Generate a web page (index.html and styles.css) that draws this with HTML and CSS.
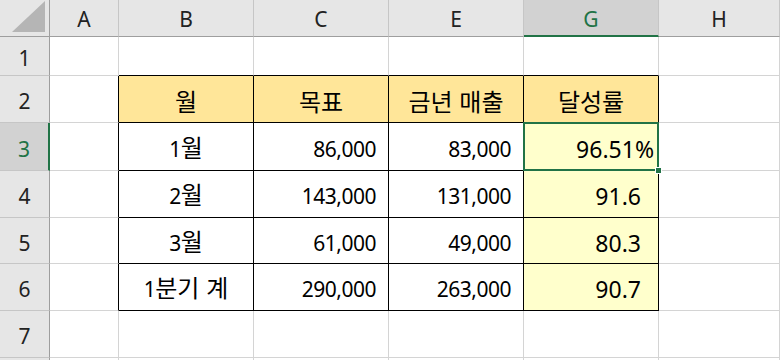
FILE: index.html
```html
<!DOCTYPE html>
<html lang="ko">
<head>
<meta charset="utf-8">
<link rel="stylesheet" href="styles.css">
</head>
<body>
<div class="sheet">
  <div class="corner"><svg class="tri" width="34" height="32" viewBox="0 0 34 32"><polygon points="33,0 33,31 0,31" fill="#b5b5b5"/></svg></div>
  <div class="ch">A</div>
  <div class="ch">B</div>
  <div class="ch">C</div>
  <div class="ch">E</div>
  <div class="ch sel-ch">G</div>
  <div class="ch">H</div>

  <div class="rh">1</div>
  <div class="c"></div>
  <div class="c tb"></div>
  <div class="c tb"></div>
  <div class="c tb"></div>
  <div class="c tb"></div>
  <div class="c"></div>

  <div class="rh">2</div>
  <div class="c lb"></div>
  <div class="c hd"><span class="k">월</span></div>
  <div class="c hd"><span class="k">목표</span></div>
  <div class="c hd"><span class="k">금년 매출</span></div>
  <div class="c hd"><span class="k">달성률</span></div>
  <div class="c"></div>

  <div class="rh sel-rh">3</div>
  <div class="c lb"></div>
  <div class="c bx ctr"><span>1<span class="k">월</span></span></div>
  <div class="c bx num">86,000</div>
  <div class="c bx num">83,000</div>
  <div class="c bx rate active">96.51%<div class="selbox"><div class="handle"></div></div></div>
  <div class="c"></div>

  <div class="rh">4</div>
  <div class="c lb"></div>
  <div class="c bx ctr"><span>2<span class="k">월</span></span></div>
  <div class="c bx num">143,000</div>
  <div class="c bx num">131,000</div>
  <div class="c bx rate pad">91.6</div>
  <div class="c"></div>

  <div class="rh">5</div>
  <div class="c lb"></div>
  <div class="c bx ctr"><span>3<span class="k">월</span></span></div>
  <div class="c bx num">61,000</div>
  <div class="c bx num">49,000</div>
  <div class="c bx rate pad">80.3</div>
  <div class="c"></div>

  <div class="rh">6</div>
  <div class="c lb"></div>
  <div class="c bx ctr"><span>1<span class="k">분기 계</span></span></div>
  <div class="c bx num">290,000</div>
  <div class="c bx num">263,000</div>
  <div class="c bx rate pad">90.7</div>
  <div class="c"></div>

  <div class="rh">7</div>
  <div class="c"></div>
  <div class="c"></div>
  <div class="c"></div>
  <div class="c"></div>
  <div class="c"></div>
  <div class="c"></div>

  <div class="rh"></div>
  <div class="c"></div>
  <div class="c"></div>
  <div class="c"></div>
  <div class="c"></div>
  <div class="c"></div>
  <div class="c"></div>
</div>
</body>
</html>
```

FILE: styles.css
```css
* { box-sizing: border-box; }
html, body { margin: 0; padding: 0; background: #fff; }
body {
  width: 780px;
  height: 360px;
  overflow: hidden;
  font-family: "Noto Sans", "Noto Sans CJK KR", sans-serif;
  color: #000;
}
.sheet {
  display: grid;
  grid-template-columns: 50px 69px 135px 135px 135px 135px 1fr;
  grid-template-rows: 37px 39px 47px 48px 47px 46px 47px 47px 10px;
  width: 780px;
}
.corner, .ch, .rh {
  background: #e6e6e6;
  color: #222;
  font-size: 21px;
  display: flex;
  align-items: center;
  justify-content: center;
}
.corner {
  border-right: 1px solid #9e9e9e;
  border-bottom: 1px solid #9e9e9e;
  align-items: flex-end;
  justify-content: flex-end;
  padding: 0 3px 3px 0;
}
.ch {
  border-right: 1px solid #c6c6c6;
  border-bottom: 1px solid #9e9e9e;
  padding-top: 1px;
}
.rh {
  border-right: 1px solid #9e9e9e;
  border-bottom: 1px solid #c6c6c6;
  padding-top: 4px;
}
.sel-ch {
  background: #d2d2d2;
  color: #217346;
  border-bottom: 2px solid #217346;
  padding-top: 2px;
}
.sel-rh {
  background: #d2d2d2;
  color: #217346;
  border-right: 2px solid #217346;
}
.c {
  border-right: 1px solid #d4d4d4;
  border-bottom: 1px solid #d4d4d4;
  font-size: 21px;
  letter-spacing: -0.5px;
  display: flex;
  align-items: center;
  padding-top: 4px;
  white-space: nowrap;
}
.k {
  font-family: "Noto Sans CJK KR", sans-serif;
  font-size: 24px;
  letter-spacing: 0;
  line-height: 1;
}
.tb { border-bottom-color: #000; }
.lb { border-right-color: #000; }
.bx, .hd { border-right-color: #000; border-bottom-color: #000; }
.hd {
  background: #ffe699;
  justify-content: center;
}
.ctr { justify-content: center; }
.num { justify-content: flex-end; padding-right: 12px; }
.rate {
  background: #ffffcc;
  justify-content: flex-end;
  font-size: 23px;
  letter-spacing: 0;
  padding-right: 4px;
}
.rate.pad { padding-right: 17px; }
.active { position: relative; }
.selbox {
  position: absolute;
  left: -1px;
  top: -1px;
  right: -1px;
  bottom: -1px;
  border: 2px solid #217346;
}
.handle {
  position: absolute;
  right: -5px;
  bottom: -5px;
  width: 7px;
  height: 7px;
  background: #217346;
  border: 1px solid #fff;
}
```
